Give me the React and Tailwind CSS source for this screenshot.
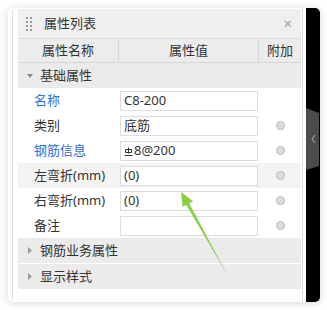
import React from 'react';

const font = { fontFamily: '"Noto Sans", "Noto Sans CJK SC", sans-serif' };

const rows = [
  { label: '名称', value: 'C8-200', blue: true, radio: false },
  { label: '类别', value: '底筋', radio: true },
  { label: '钢筋信息', value: 'rebar', blue: true, radio: true },
  { label: '左弯折(mm)', value: '(0)', radio: true, active: true },
  { label: '右弯折(mm)', value: '(0)', radio: true },
  { label: '备注', value: '', radio: true },
];

function Grip() {
  return (
    <div className="grid grid-cols-2 gap-x-[2px] gap-y-[2px] w-[6px] ml-[8px]">
      {Array.from({ length: 8 }).map((_, i) => (
        <span key={i} className="w-[2px] h-[2px] bg-[#9a9a9a]" />
      ))}
    </div>
  );
}

function RebarMark() {
  return (
    <svg width="9" height="10" viewBox="0 0 9 10" className="mb-[4px] mr-[1px]">
      <path d="M4.5 0.5V6.5M1.5 2.5H7.5V5.5H1.5Z M0.5 8.5H8.5" stroke="#333" strokeWidth="1" fill="none" />
    </svg>
  );
}

function Section({ label, open }) {
  return (
    <div className="h-[25px] flex items-center bg-[#ebebeb] text-[13px] text-[#333]">
      <span className="w-[22px] flex justify-center pl-[2px]">
        {open ? (
          <svg width="6" height="4" viewBox="0 0 6 4"><path d="M0 0H6L3 4Z" fill="#8a8a8a" /></svg>
        ) : (
          <svg width="4" height="7" viewBox="0 0 4 7"><path d="M0 0V7L4 3.5Z" fill="#9a9a9a" /></svg>
        )}
      </span>
      <span>{label}</span>
    </div>
  );
}

function Row({ row }) {
  return (
    <div className={`h-[25px] flex text-[13px] ${row.active ? 'bg-[#f3f3f3]' : 'bg-white'}`}>
      <div className={`w-[101px] pl-[16px] flex items-center ${row.blue ? 'text-[#2f6ee0]' : 'text-[#333]'}`}>
        {row.label}
      </div>
      <div className="w-[140px] pl-[1px] pt-[3px]">
        <div className="h-[20px] w-[138px] border border-[#dcdcdc] bg-white flex items-center pl-[3px] text-[#333]">
          {row.value === 'rebar' ? (
            <span className="flex items-end"><RebarMark />8@200</span>
          ) : (
            row.value
          )}
        </div>
      </div>
      <div className="flex-1 flex items-center justify-center">
        {row.radio && <span className="w-[9px] h-[9px] rounded-full bg-[#dcdcdc] border border-[#b8b8b8]" />}
      </div>
    </div>
  );
}

export default function App() {
  return (
    <div className="w-[327px] h-[310px] bg-white pt-[8px] pl-[8px] relative" style={font}>
      <div className="flex w-[312px] h-[294px] rounded-[5px] bg-white shadow-[0_1px_8px_rgba(0,0,0,0.16)]">
        <div className="w-[4px]" />
        <div className="w-px bg-[#dedede] my-[2px]" />
        <div className="w-[5px]" />
        <div className="w-[283px] flex flex-col pt-[1px]">
          <div className="h-[30px] flex items-center bg-[#efefef] border-b border-[#dddddd]">
            <Grip />
            <span className="ml-[12px] text-[13px] text-[#333]">属性列表</span>
            <span className="ml-auto mr-[9px] text-[#a0a0a0] text-[15px] leading-none">×</span>
          </div>
          <div className="h-[24px] flex bg-[#ececec] border-b border-[#d6d6d6] text-[13px] text-[#333]">
            <div className="w-[101px] flex items-center justify-center border-r border-[#d6d6d6]">属性名称</div>
            <div className="w-[140px] flex items-center justify-center border-r border-[#d6d6d6]">属性值</div>
            <div className="flex-1 flex items-center justify-center">附加</div>
          </div>
          <Section label="基础属性" open />
          {rows.map((r) => (
            <Row key={r.label} row={r} />
          ))}
          <Section label="钢筋业务属性" />
          <div className="h-px bg-white" />
          <Section label="显示样式" />
        </div>
        <div className="w-px" />
        <div className="w-px bg-[#dedede]" />
        <div className="w-[3px]" />
        <div className="w-[14px] bg-black rounded-r-[5px] pt-[100px]">
          <svg width="14" height="64" viewBox="0 0 14 64">
            <path d="M0 0L13 5V58L0 62Z" fill="#4b4b4b" />
            <path d="M9 27L6 31L9 35" stroke="#9a9a9a" strokeWidth="1.2" fill="none" />
          </svg>
        </div>
      </div>
      <svg className="absolute left-0 top-0 pointer-events-none" width="327" height="310">
        <path
          d="M181 192L193.1 201.3L189.3 203.6L228 276L186.3 205L182.6 207.1Z"
          fill="#8ccf45"
        />
      </svg>
    </div>
  );
}
